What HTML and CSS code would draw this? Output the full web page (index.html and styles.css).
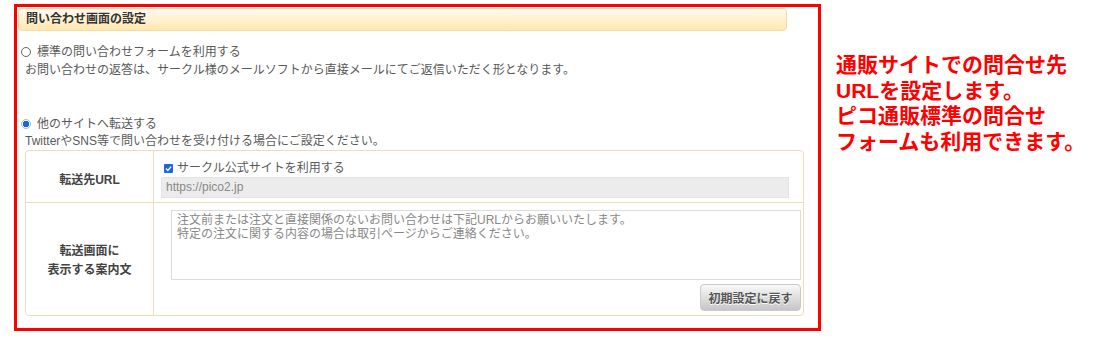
FILE: index.html
```html
<!DOCTYPE html>
<html>
<head>
    <meta charset="utf-8">
    <title>問い合わせ画面の設定</title>
    <link rel="stylesheet" href="styles.css">
</head>
<body>

    <div class="page">

        <!-- settings block, outlined in red -->
        <div class="frame">
            <div class="heading">問い合わせ画面の設定</div>

            <label class="option first">
                <input type="radio" name="contact" class="radio">
                標準の問い合わせフォームを利用する
            </label>
            <p class="desc">お問い合わせの返答は、サークル様のメールソフトから直接メールにてご返信いただく形となります。</p>

            <label class="option second">
                <input type="radio" name="contact" class="radio" checked>
                他のサイトへ転送する
            </label>
            <p class="desc last">TwitterやSNS等で問い合わせを受け付ける場合にご設定ください。</p>

            <div class="form-table">
                <div class="form-row url-row">
                    <div class="form-label">転送先URL</div>
                    <div class="form-value">
                        <label class="check-line">
                            <input type="checkbox" class="check" checked>
                            サークル公式サイトを利用する
                        </label>
                        <div class="url-input">https://pico2.jp</div>
                    </div>
                </div>
                <div class="form-row text-row">
                    <div class="form-label">転送画面に<br>表示する案内文</div>
                    <div class="form-value">
                        <div class="text-box">注文前または注文と直接関係のないお問い合わせは下記URLからお願いいたします。<br>特定の注文に関する内容の場合は取引ページからご連絡ください。</div>
                        <div class="actions">
                            <button class="reset-btn">初期設定に戻す</button>
                        </div>
                    </div>
                </div>
            </div>
        </div>

        <!-- annotation -->
        <p class="note">
            通販サイトでの問合せ先<br>
            URLを設定します。<br>
            ピコ通販標準の問合せ<br>
            フォームも利用できます。
        </p>

    </div>

</body>
</html>
```

FILE: styles.css
```css
body {
    margin: 0;
    padding: 0;
    background-color: #fff;
    font-family: "Liberation Sans", "Noto Sans CJK JP", sans-serif;
    font-size: 12px;
    color: #595959;
}

.page {
    display: flex;
    align-items: flex-start;
    padding: 4px 0 0 14px;
}

/* red outline */
.frame {
    box-sizing: border-box;
    width: 807px;
    height: 327px;
    border: 3px solid #f00;
    padding: 1px 0 0 1px;
}

.heading {
    box-sizing: border-box;
    width: 769px;
    height: 23px;
    border: 1px solid #f2dca6;
    border-radius: 4px;
    background: linear-gradient(#fffbf1, #ffe8ae);
    padding-left: 7px;
    line-height: 21px;
    font-weight: bold;
    color: #333;
}

/* radio options */
.option {
    display: flex;
    align-items: center;
    gap: 6px;
    padding-left: 3px;
    height: 18px;
    line-height: 18px;
}

.option.first {
    margin-top: 12px;
}

.option.second {
    margin-top: 36px;
}

.radio {
    appearance: none;
    box-sizing: border-box;
    width: 10px;
    height: 10px;
    margin: 0;
    border: 1px solid #666;
    border-radius: 50%;
    background: #fff;
}

.radio:checked {
    border: 1px solid #9bb9e8;
    background: radial-gradient(circle, #1a66e0 0 3px, #fff 3.5px);
}

.desc {
    margin: 0;
    padding-left: 7px;
    line-height: 18px;
}

.desc.last {
    line-height: 17px;
}

/* settings table */
.form-table {
    box-sizing: border-box;
    width: 779px;
    margin-left: 7px;
    border: 1px solid #efdcba;
    border-radius: 4px;
}

.form-row {
    display: grid;
    grid-template-columns: 128px 1fr;
}

.url-row {
    height: 51px;
    border-bottom: 1px solid #efdcba;
}

.text-row {
    height: 112px;
}

.form-label {
    display: flex;
    align-items: center;
    justify-content: center;
    border-right: 1px solid #efdcba;
    text-align: center;
    font-weight: bold;
    color: #444;
    line-height: 19px;
}

.url-row .form-label {
    padding-top: 8px;
}

.text-row .form-label {
    padding-top: 4px;
}

.check-line {
    display: flex;
    align-items: center;
    gap: 4px;
    margin: 9px 0 0 10px;
    height: 17px;
    line-height: 17px;
}

.check {
    appearance: none;
    box-sizing: border-box;
    width: 9px;
    height: 9px;
    margin: 0;
    border-radius: 1px;
    background: #1a66e0 url("data:image/svg+xml,%3Csvg xmlns='http://www.w3.org/2000/svg' viewBox='0 0 9 9'%3E%3Cpath d='M2 4.6 3.8 6.4 7.2 2.6' fill='none' stroke='%23fff' stroke-width='1.4'/%3E%3C/svg%3E") center / 9px 9px no-repeat;
}

.url-input {
    box-sizing: border-box;
    width: 628px;
    height: 21px;
    margin: 0 0 0 7px;
    padding-left: 4px;
    background: #ececec;
    border: 1px solid #e4e4e4;
    line-height: 19px;
    color: #888;
}

.text-box {
    box-sizing: border-box;
    width: 630px;
    height: 70px;
    margin: 7px 0 0 17px;
    padding: 2px 5px;
    border: 1px solid #dcdcdc;
    line-height: 14px;
    color: #888;
}

.actions {
    display: flex;
    justify-content: flex-end;
    padding-right: 2px;
    margin-top: 4px;
}

.reset-btn {
    box-sizing: border-box;
    width: 101px;
    height: 27px;
    border: 1px solid #cacaca;
    border-radius: 4px;
    background: linear-gradient(#f8f8f8, #c6c6c6);
    font-family: inherit;
    font-size: 12px;
    font-weight: bold;
    color: #555;
    text-shadow: 0 1px 0 #fff;
    padding: 0;
}

/* red annotation */
.note {
    margin: 48px 0 0 15px;
    font-size: 21px;
    line-height: 25.5px;
    font-weight: bold;
    color: #f00;
}
```
